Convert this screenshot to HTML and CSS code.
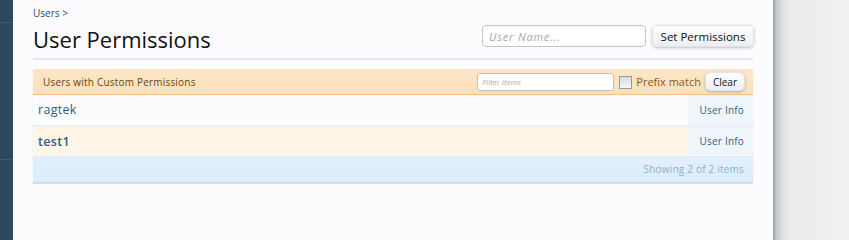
FILE: index.html
```html
<!DOCTYPE html>
<html>
<head>
<meta charset="utf-8">
<link rel="stylesheet" href="styles.css">
</head>
<body>
<div class="sidebar"></div>
<div class="main">
  <div class="crumbs"><a href="#">Users</a> &gt;</div>
  <div class="titlebar">
    <h1>User Permissions</h1>
    <form class="topform">
      <input class="username" type="text" placeholder="User Name...">
      <button type="button" class="btn set">Set Permissions</button>
    </form>
  </div>
  <div class="section">
    <div class="sechead">
      <span class="sectitle">Users with Custom Permissions</span>
      <div class="filter">
        <input class="filterbox" type="text" placeholder="Filter items">
        <span class="check"></span>
        <span class="prefix">Prefix match</span>
        <button type="button" class="btn small">Clear</button>
      </div>
    </div>
    <div class="row">
      <a class="name" href="#">ragtek</a>
      <a class="info" href="#">User Info</a>
    </div>
    <div class="row alt">
      <a class="name bold" href="#">test1</a>
      <a class="info" href="#">User Info</a>
    </div>
    <div class="footer">Showing 2 of 2 items</div>
  </div>
</div>
<div class="shade"></div>
</body>
</html>
```
FILE: styles.css
```css
html, body { margin: 0; padding: 0; height: 100%; }
body {
  display: flex;
  font-family: "Open Sans", "DejaVu Sans", sans-serif;
  background: #f0f0f0;
  overflow: hidden;
}
.sidebar {
  width: 13px;
  flex: none;
  background:
    linear-gradient(#3b5d75, #3b5d75) 0 22px / 100% 1px no-repeat,
    linear-gradient(#3b5d75, #3b5d75) 0 159px / 100% 1px no-repeat,
    #2b4a5f;
}
.main {
  width: 720px;
  flex: none;
  background: #fcfcff;
  padding: 0 20px;
}
.shade {
  flex: 1;
  background: linear-gradient(to right, #98a1a8 0, #c6cbce 4px, #e0e2e4 10px, #ececec 20px, #f1f1f1 100%);
}
.crumbs {
  font-size: 10px;
  color: #2b4a6a;
  padding-top: 6px;
  height: 14px;
  line-height: 14px;
}
.crumbs a { color: #2b4a6a; text-decoration: none; }
.titlebar {
  display: flex;
  justify-content: space-between;
  align-items: flex-start;
  border-bottom: 2px solid #dce9f5;
  height: 38px;
}
h1 {
  margin: 0;
  font-weight: normal;
  font-size: 22px;
  color: #111;
  line-height: 30px;
  padding-top: 4px;
}
.topform {
  display: flex;
  gap: 6px;
  padding-top: 5px;
  margin-right: -1px;
}
.username {
  width: 164px;
  height: 22px;
  box-sizing: border-box;
  border: 1px solid #c4c4c4;
  border-radius: 4px;
  padding: 0 6px;
  font-family: inherit;
  font-size: 11px;
  background: #fff;
}
.username::placeholder { color: #a8a8a8; font-style: italic; letter-spacing: 0.8px; }
.btn {
  font-family: inherit;
  font-size: 11.5px;
  color: #111;
  height: 22px;
  padding: 0 6px;
  border: 1px solid #e2e4e8;
  border-radius: 5px;
  background: linear-gradient(#ffffff, #eceef2);
  box-shadow: 0 1px 3px rgba(0,0,0,0.25);
}
.btn.set { width: 102px; }
.section {
  margin-top: 9px;
  box-shadow: 0 1px 1px rgba(150,170,190,0.35);
}
.sechead {
  height: 25px;
  background: linear-gradient(#fde6c8, #fadfb9);
  border-bottom: 1px solid #f2c283;
  display: flex;
  align-items: center;
  justify-content: space-between;
  padding: 0 8px 0 10px;
}
.sectitle { font-size: 10px; color: #6b4412; letter-spacing: 0.2px; }
.filter { display: flex; align-items: center; }
.filterbox {
  width: 137px;
  height: 18px;
  box-sizing: border-box;
  border: 1px solid #cdbfae;
  border-radius: 3px;
  font-family: inherit;
  font-size: 8px;
  padding: 0 4px;
  background: #fff;
}
.filterbox::placeholder { color: #a9a9a9; font-style: italic; }
.check {
  width: 11px;
  height: 11px;
  border: 1px solid #9a9a9a;
  background: linear-gradient(#dcdcdc, #f4f4f4);
  margin: 0 4px 0 5px;
  align-self: flex-start;
  margin-top: 4px;
}
.prefix { font-size: 11px; color: #8a5a1a; margin-right: 4px; }
.btn.small { height: 19px; padding: 0 7px; font-size: 10px; border-radius: 6px; }
.row {
  display: flex;
  height: 30px;
  border-bottom: 2px solid #eef1f4;
  background: #fcfcff;
}
.row.alt {
  background: linear-gradient(#fff4e4, #fff7ec);
  border-bottom: 1px solid #e3eef8;
  height: 29px;
}
.name {
  flex: 1;
  padding-left: 5px;
  font-size: 12.5px;
  line-height: 30px;
  color: #2f5d82;
  text-decoration: none;
  letter-spacing: 0.3px;
}
.name.bold { font-weight: 600; line-height: 29px; }
.info {
  width: 65px;
  flex: none;
  box-sizing: border-box;
  background: #eef6fc;
  text-align: right;
  padding-right: 9px;
  font-size: 10px;
  line-height: 30px;
  color: #2f5d82;
  text-decoration: none;
  letter-spacing: 0.2px;
}
.row.alt .info { line-height: 29px; }
.footer {
  height: 25px;
  background: linear-gradient(#e2f0fc, #dcecfa);
  border-bottom: 1px solid #c8dae9;
  text-align: right;
  padding-right: 9px;
  font-size: 10px;
  line-height: 25px;
  color: #8ab0c9;
  letter-spacing: 0.2px;
}
```
